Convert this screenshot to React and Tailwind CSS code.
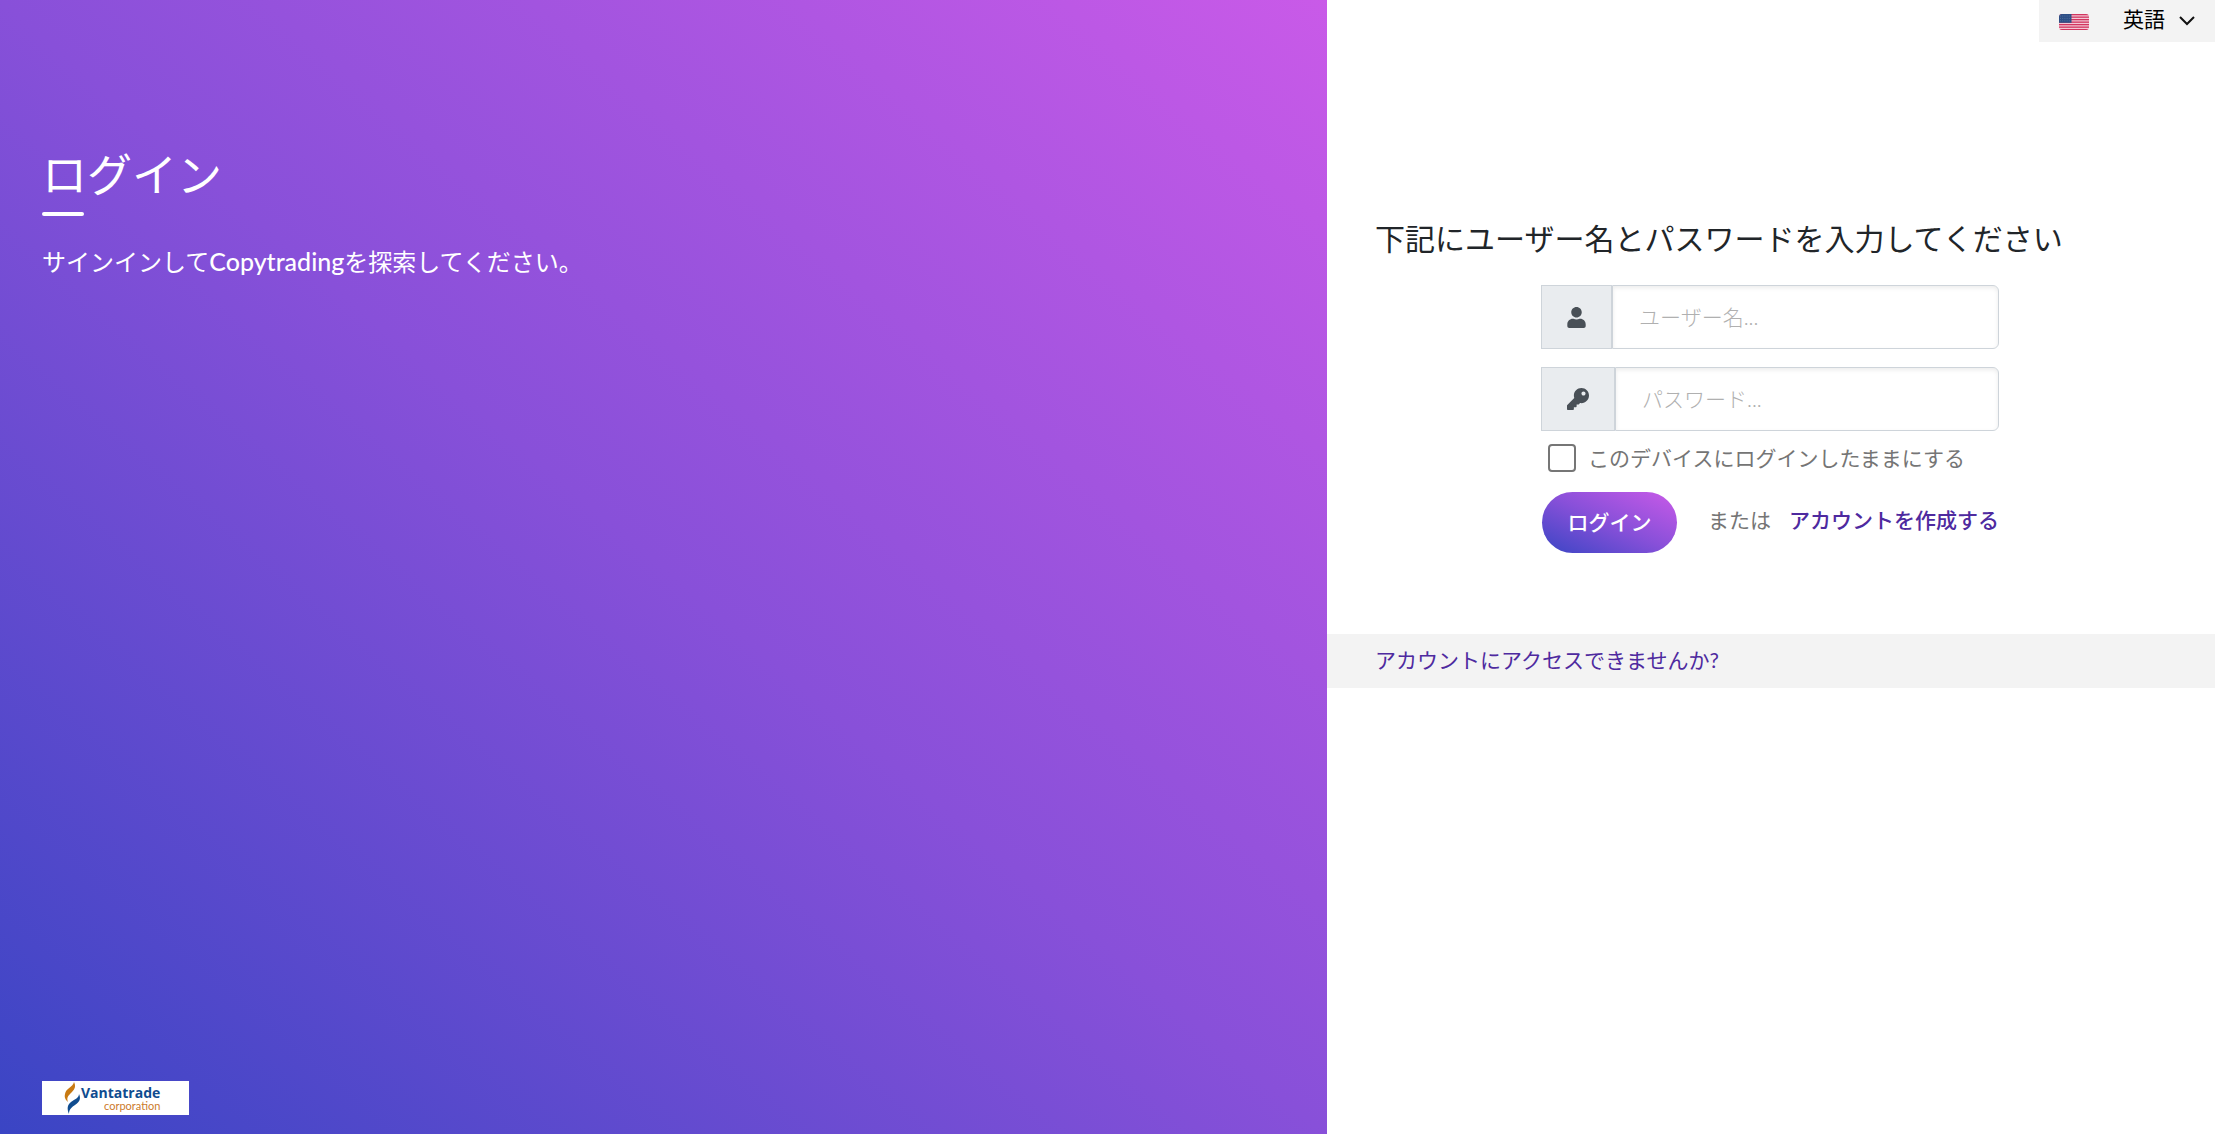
import { FaKey, FaUser } from 'react-icons/fa'

const gradient = 'bg-[linear-gradient(to_top_right,#3a45c4,#8850d9,#c95ae8)]'
const addon = 'flex items-center justify-center border border-[#ced4da] bg-[#e9ecef] text-[#495057]'
const field = 'min-w-0 flex-1 rounded-r-md border border-[#ced4da] bg-white px-[26px] text-[21px] text-gray-700 shadow-[inset_0_2px_4px_rgba(0,0,0,0.08)] placeholder:font-light placeholder:text-[#b0b0b0]'

function Flag() {
  return (
    <svg viewBox="0 0 30 16" className="mt-0.5 h-4 w-[30px]" aria-hidden="true">
      <clipPath id="flag"><rect width="30" height="16" rx="3" /></clipPath>
      <g clipPath="url(#flag)">
        <rect width="30" height="16" fill="#f3c9d6" />
        {[0, 2.5, 5, 7.5, 10, 12.5, 15].map((y) => (
          <rect key={y} y={y} width="30" height="1.3" fill="#d2355f" />
        ))}
        <rect width="12.5" height="8.8" fill="#2d4f86" />
        <path d="M1 2h11M1 4.4h11M1 6.8h11" stroke="#5f7ca8" strokeWidth="0.7" strokeDasharray="1 1.2" />
      </g>
    </svg>
  )
}

function Logo() {
  return (
    <div className="flex h-[34px] w-[147px] items-center bg-white pl-[22px]">
      <svg viewBox="0 0 17 32" className="h-8 w-[17px]" aria-hidden="true">
        <path d="M10 0C9 5 2 6 1 12c-1 4 1 6 3 8-2-5 1-7 4-10 3-3 4-6 2-10z" fill="#c87a12" />
        <path d="M15 12c0 4-4 5-8 8-4 3-4 7-2 12 0-5 3-7 6-9 5-3 6-7 4-11z" fill="#0f4c8f" />
      </svg>
      <div className="flex flex-col items-end">
        <span className="font-['Open_Sans',sans-serif] text-[14px] leading-4 font-bold text-[#0f4c8f]">Vantatrade</span>
        <span className="font-['Lato',sans-serif] text-[11px] leading-[10px] text-[#cc7a2b]">corporation</span>
      </div>
    </div>
  )
}

export default function App() {
  return (
    <div className="flex min-h-screen bg-white font-['Lato','Noto_Sans_CJK_JP',sans-serif] text-[21px]" lang="ja">
      <section className={`flex w-[59.86%] flex-col justify-between px-[42px] pt-[142px] pb-[19px] text-white ${gradient}`}>
        <div>
          <h1 className="text-[45px] leading-[66px]">ログイン</h1>
          <div className="mt-1 h-1 w-[42px] rounded-full bg-white" />
          <p className="mt-[27px] text-[24px] leading-9">サインインして<span className="text-[25px] font-medium">Copytrading</span>を探索してください。</p>
        </div>
        <Logo />
      </section>

      <main className="flex flex-1 flex-col pr-0.5">
        <div className="relative flex h-[42px] items-center self-end bg-[#f3f3f3] pl-5">
          <Flag />
          <select aria-label="言語" className="ml-[34px] h-full w-[92px] appearance-none bg-transparent pb-1 text-black">
            <option>英語</option>
          </select>
          <svg viewBox="0 0 16 10" className="pointer-events-none absolute right-5 h-2.5 w-4" fill="none" stroke="#111" strokeWidth="2" aria-hidden="true">
            <path d="m1 1 7 7 7-7" />
          </svg>
        </div>

        <h2 className="mt-[174px] pl-12 text-[30px] leading-[45px] text-[#212529]">下記にユーザー名とパスワードを入力してください</h2>

        <div className="mt-6 flex justify-center pr-0.5">
          <form className="w-[458px] text-[#757575]">
            <div className="flex h-16">
              <label htmlFor="username" className={`w-[71px] ${addon}`} aria-label="ユーザー名"><FaUser size={21} /></label>
              <input id="username" type="text" placeholder="ユーザー名..." className={field} />
            </div>
            <div className="mt-[18px] flex h-16">
              <label htmlFor="password" className={`w-[74px] ${addon}`} aria-label="パスワード"><FaKey size={22} /></label>
              <input id="password" type="password" placeholder="パスワード..." className={field} />
            </div>
            <label className="mt-[11px] flex h-8 items-center gap-3 pl-[7px]">
              <input type="checkbox" className="size-7 appearance-none rounded-sm border-2 border-[#767676] bg-white" />
              このデバイスにログインしたままにする
            </label>
            <div className="mt-[18px] flex items-center justify-between pl-px">
              <button type="button" className={`h-[61px] w-[135px] rounded-full pb-0.5 font-medium text-white ${gradient}`}>ログイン</button>
              <p className="flex gap-[18px] pb-1.5">
                または
                <a href="#" className="font-medium text-[#4e2a9f]">アカウントを作成する</a>
              </p>
            </div>
          </form>
        </div>

        <div className="mt-[81px] flex h-[54px] items-center bg-[#f3f3f3] pb-0.5 pl-12">
          <a href="#" className="text-[#4e2a9f]">アカウントにアクセスできませんか?</a>
        </div>
      </main>
    </div>
  )
}
